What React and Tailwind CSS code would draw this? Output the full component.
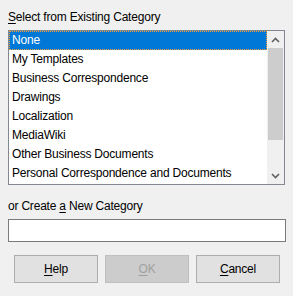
import React from 'react';

// Category picker dialog (Save as Template style)
const items = [
  'None',
  'My Templates',
  'Business Correspondence',
  'Drawings',
  'Localization',
  'MediaWiki',
  'Other Business Documents',
  'Personal Correspondence and Documents',
];

const Chevron = ({ up }) => (
  <svg width="9" height="6" viewBox="0 0 9 6" className="block">
    <path
      d={up ? 'M1 5 L4.5 1.5 L8 5' : 'M1 1 L4.5 4.5 L8 1'}
      fill="none"
      stroke="#606060"
      strokeWidth="1.6"
    />
  </svg>
);

const Button = ({ children, disabled }) => (
  <button
    className={
      disabled
        ? 'w-[84px] h-[28px] border border-[#bfbfbf] bg-[#cccccc] text-[#a0a0a0]'
        : 'w-[84px] h-[28px] border border-[#adadad] bg-[#e1e1e1] text-black'
    }
  >
    {children}
  </button>
);

export default function App() {
  return (
    <div
      className="w-[293px] h-[296px] bg-[#f0f0f0] px-2 pt-[9px] text-[12px] tracking-[-0.2px] text-black"
      style={{ fontFamily: '"Liberation Sans", Arial, sans-serif' }}
    >
      <div className="leading-[16px] mb-[5px]">
        <span className="underline underline-offset-2">S</span>elect from Existing Category
      </div>

      {/* list box */}
      <div className="w-[277px] h-[155px] border border-[#828790] bg-white flex">
        <div className="w-[258px] flex flex-col">
          {items.map((item, i) => (
            <div
              key={item}
              className={
                i === 0
                  ? 'h-[19px] leading-[17px] pl-[2px] bg-[#0078d7] text-white border border-dotted border-[#f5a030] whitespace-nowrap'
                  : 'h-[19px] leading-[19px] pl-[3px] whitespace-nowrap'
              }
            >
              {item}
            </div>
          ))}
        </div>
        <div className="w-[17px] bg-[#f0f0f0] flex flex-col">
          <div className="h-[17px] flex items-center justify-center">
            <Chevron up />
          </div>
          <div className="h-[92px] ml-[1px] w-[15px] bg-[#cdcdcd]" />
          <div className="flex-1" />
          <div className="h-[17px] flex items-center justify-center">
            <Chevron />
          </div>
        </div>
      </div>

      <div className="leading-[16px] mt-[13px] mb-[5px]">
        or Create <span className="underline underline-offset-2">a</span> New Category
      </div>
      <div className="w-[278px] h-[23px] border border-[#7a7a7a] bg-white" />

      <div className="flex gap-[7px] pl-[6px] mt-[13px]">
        <Button>
          <span className="underline underline-offset-2">H</span>elp
        </Button>
        <Button disabled>
          <span className="underline underline-offset-2">O</span>K
        </Button>
        <Button>
          <span className="underline underline-offset-2">C</span>ancel
        </Button>
      </div>
    </div>
  );
}
